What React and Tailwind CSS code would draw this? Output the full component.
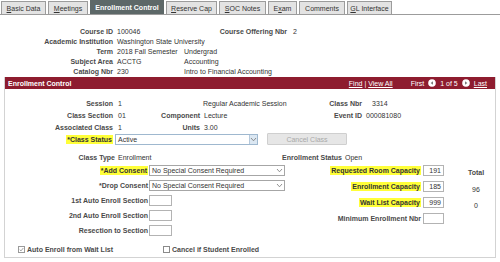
import React from "react";

function Tab({ w, pre = "", u = "", post = "", active }) {
  if (active) {
    return (
      <div className={`${w} h-[14px] bg-[#5d6868] text-white font-bold flex items-center justify-center leading-none`}>
        {pre}
      </div>
    );
  }
  return (
    <div className={`${w} h-[13px] bg-[#e3e3e3] border border-b-0 border-[#9c9c9c] text-[#333] flex items-center justify-center leading-none`}>
      {pre}
      {u && <span className="underline">{u}</span>}
      {post}
    </div>
  );
}

function Hl({ children }) {
  return <span className="bg-[#ffff38] text-[#333] px-[1px] py-[1px]">{children}</span>;
}

function NavIcon({ dir }) {
  return (
    <svg width="8" height="8" viewBox="0 0 8 8" className="shrink-0">
      <circle cx="4" cy="4" r="3.8" fill="#ffffff" />
      {dir === "left" ? (
        <polygon points="5,2.3 2.6,4 5,5.7" fill="#7a7a7a" />
      ) : (
        <polygon points="3,2.3 5.4,4 3,5.7" fill="#7a7a7a" />
      )}
    </svg>
  );
}

function Chevron() {
  return (
    <svg width="7" height="5" viewBox="0 0 7 5">
      <polyline points="1,1 3.5,3.8 6,1" fill="none" stroke="#777" strokeWidth="0.8" />
    </svg>
  );
}

function Select({ w, value, blue }) {
  return (
    <div
      className={`${w} h-[11px] bg-white border ${blue ? "border-[#9fb8cf]" : "border-[#a6a6a6]"} flex items-center text-[#333]`}
    >
      <span className="pl-[2px] flex-1 leading-none">{value}</span>
      {blue ? (
        <span className="w-[8px] h-full bg-[#dbe7f2] border-l border-[#b5c9dc] flex items-center justify-center">
          <Chevron />
        </span>
      ) : (
        <span className="w-[10px] h-full flex items-center justify-center">
          <Chevron />
        </span>
      )}
    </div>
  );
}

function Input({ w, value = "" }) {
  return (
    <div className={`${w} h-[11px] bg-white border border-[#b3b3b3] flex items-center justify-end pr-[2px] text-[#333] leading-none`}>
      {value}
    </div>
  );
}

export default function App() {
  return (
    <div className="w-[500px] h-[262px] overflow-hidden bg-white font-['Liberation_Sans',Arial,sans-serif] text-[7px] text-[#333]">
      {/* Tabs */}
      <div className="h-[15px] pl-[1px] flex items-end gap-[2px] border-b border-[#9c9c9c]">
        <Tab w="w-[45px]" u="B" post="asic Data" />
        <Tab w="w-[40px]" u="M" post="eetings" />
        <Tab w="w-[74px]" pre="Enrollment Control" active />
        <Tab w="w-[51px]" u="R" post="eserve Cap" />
        <Tab w="w-[47px]" u="S" post="OC Notes" />
        <Tab w="w-[29px]" pre="E" u="x" post="am" />
        <Tab w="w-[46px]" pre="Comments" />
        <Tab w="w-[45px]" u="G" post="L Interface" />
      </div>

      {/* Header info */}
      <div className="mt-[11px] flex flex-col">
        {[
          ["Course ID", "100046", null],
          ["Academic Institution", "Washington State University", ""],
          ["Term", "2018 Fall Semester", "Undergrad"],
          ["Subject Area", "ACCTG", "Accounting"],
          ["Catalog Nbr", "230", "Intro to Financial Accounting"],
        ].map(([l, v, x], i) => (
          <div key={i} className="h-[10px] flex items-center leading-none">
            <div className="w-[113px] text-right font-bold text-[#4a4a4a]">{l}</div>
            <div className={`${i === 1 ? "w-[150px]" : "w-[71px]"} pl-[4px] whitespace-nowrap`}>{v}</div>
            {i === 0 ? (
              <>
                <div className="w-[103px] text-right font-bold text-[#4a4a4a]">Course Offering Nbr</div>
                <div className="pl-[6px]">2</div>
              </>
            ) : (
              <div className="whitespace-nowrap">{x}</div>
            )}
          </div>
        ))}
      </div>

      {/* Panel */}
      <div className="mt-[1px] mx-[4px] h-[181px] border border-[#d3d3d3] border-t-0 flex flex-col">
        <div className="h-[12px] bg-[#8e1c2f] flex items-center text-white leading-none">
          <div className="pl-[3px] font-bold">Enrollment Control</div>
          <div className="ml-auto flex items-center">
            <span className="underline">Find</span>
            <span className="px-[2px]">|</span>
            <span className="underline">View All</span>
            <span className="ml-[18px]">First</span>
            <span className="ml-[4px]"><NavIcon dir="left" /></span>
            <span className="ml-[4px]">1 of 5</span>
            <span className="ml-[4px]"><NavIcon dir="right" /></span>
            <span className="ml-[4px] mr-[8px] underline">Last</span>
          </div>
        </div>

        {/* Part A */}
        <div className="pt-[8px] flex flex-col leading-none">
          <div className="h-[12px] flex items-center">
            <div className="w-[108px] text-right font-bold text-[#4a4a4a]">Session</div>
            <div className="w-[37px] pl-[5px]">1</div>
            <div className="w-[50px]"></div>
            <div className="w-[100px] pl-[3px] whitespace-nowrap">Regular Academic Session</div>
            <div className="w-[62px] text-right font-bold text-[#4a4a4a]">Class Nbr</div>
            <div className="pl-[10px]">3314</div>
          </div>
          <div className="h-[12px] flex items-center">
            <div className="w-[108px] text-right font-bold text-[#4a4a4a]">Class Section</div>
            <div className="w-[37px] pl-[5px]">01</div>
            <div className="w-[50px] text-right font-bold text-[#4a4a4a]">Component</div>
            <div className="w-[100px] pl-[4px]">Lecture</div>
            <div className="w-[62px] text-right font-bold text-[#4a4a4a]">Event ID</div>
            <div className="pl-[4px]">000081080</div>
          </div>
          <div className="h-[12px] flex items-center">
            <div className="w-[108px] text-right font-bold text-[#4a4a4a]">Associated Class</div>
            <div className="w-[37px] pl-[5px]">1</div>
            <div className="w-[50px] text-right font-bold text-[#4a4a4a]">Units</div>
            <div className="w-[100px] pl-[4px]">3.00</div>
          </div>
          <div className="h-[12px] flex items-center">
            <div className="w-[108px] text-right font-bold">
              <Hl>*Class Status</Hl>
            </div>
            <div className="ml-[2px]">
              <Select w="w-[143px]" value="Active" blue />
            </div>
            <div className="ml-[9px] w-[80px] h-[12px] bg-[#e6e6e6] border border-[#cfcfcf] rounded-[1px] flex items-center justify-center text-[#a9a9a9]">
              Cancel Class
            </div>
          </div>

          {/* Class Type row */}
          <div className="mt-[6px] h-[12px] flex items-center">
            <div className="w-[110px] text-right font-bold text-[#4a4a4a]">Class Type</div>
            <div className="w-[162px] pl-[3px]">Enrollment</div>
            <div className="w-[65px] text-right font-bold text-[#4a4a4a] whitespace-nowrap">Enrollment Status</div>
            <div className="pl-[3px]">Open</div>
          </div>

          {/* Part B */}
          <div className="flex">
            <div className="w-[285px] flex flex-col">
              <div className="h-[15px] flex items-center">
                <div className="w-[143px] text-right font-bold"><Hl>*Add Consent</Hl></div>
                <div className="ml-[1px]"><Select w="w-[136px]" value="No Special Consent Required" /></div>
              </div>
              <div className="h-[15px] flex items-center">
                <div className="w-[143px] text-right font-bold text-[#4a4a4a]">*Drop Consent</div>
                <div className="ml-[1px]"><Select w="w-[136px]" value="No Special Consent Required" /></div>
              </div>
              <div className="h-[15px] flex items-center">
                <div className="w-[143px] text-right font-bold text-[#4a4a4a]">1st Auto Enroll Section</div>
                <div className="ml-[1px]"><Input w="w-[23px]" /></div>
              </div>
              <div className="h-[15px] flex items-center">
                <div className="w-[143px] text-right font-bold text-[#4a4a4a]">2nd Auto Enroll Section</div>
                <div className="ml-[1px]"><Input w="w-[23px]" /></div>
              </div>
              <div className="h-[15px] flex items-center">
                <div className="w-[143px] text-right font-bold text-[#4a4a4a]">Resection to Section</div>
                <div className="ml-[1px]"><Input w="w-[23px]" /></div>
              </div>
            </div>
            <div className="flex flex-col">
              <div className="h-[15px] flex items-center">
                <div className="w-[131px] text-right font-bold"><Hl>Requested Room Capacity</Hl></div>
                <div className="ml-[2px]"><Input w="w-[21px]" value="191" /></div>
                <div className="ml-[23px] mt-[4px] w-[18px] text-center font-bold text-[#4a4a4a]">Total</div>
              </div>
              <div className="h-[16px] flex items-center">
                <div className="w-[131px] text-right font-bold"><Hl>Enrollment Capacity</Hl></div>
                <div className="ml-[2px]"><Input w="w-[21px]" value="185" /></div>
                <div className="ml-[23px] mt-[7px] w-[18px] text-center">96</div>
              </div>
              <div className="h-[16px] flex items-center">
                <div className="w-[131px] text-right font-bold"><Hl>Wait List Capacity</Hl></div>
                <div className="ml-[2px]"><Input w="w-[21px]" value="999" /></div>
                <div className="ml-[23px] mt-[7px] w-[18px] text-center">0</div>
              </div>
              <div className="h-[16px] flex items-center">
                <div className="w-[131px] text-right font-bold text-[#4a4a4a]">Minimum Enrollment Nbr</div>
                <div className="ml-[2px]"><Input w="w-[21px]" /></div>
              </div>
            </div>
          </div>

          {/* Checkboxes */}
          <div className="mt-[5px] h-[12px] flex items-center pl-[13px]">
            <div className="w-[145px] flex items-center">
              <span className="w-[7px] h-[7px] border border-[#9a9a9a] bg-white flex items-center justify-center">
                <svg width="5" height="5" viewBox="0 0 5 5">
                  <polyline points="0.7,2.6 2,3.9 4.3,1" fill="none" stroke="#8a8a8a" strokeWidth="0.8" />
                </svg>
              </span>
              <span className="ml-[2px] font-bold text-[#4a4a4a]">Auto Enroll from Wait List</span>
            </div>
            <div className="flex items-center">
              <span className="w-[7px] h-[7px] border border-[#8a8a8a] bg-white"></span>
              <span className="ml-[2px] font-bold text-[#4a4a4a]">Cancel if Student Enrolled</span>
            </div>
          </div>
        </div>
      </div>
    </div>
  );
}
